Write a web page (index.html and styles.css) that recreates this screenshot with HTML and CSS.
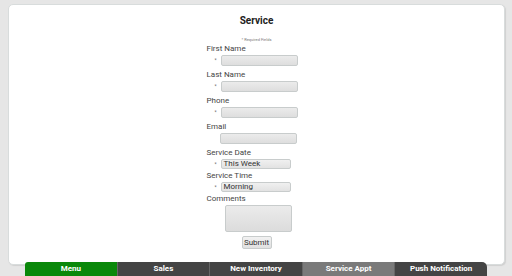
FILE: index.html
```html
<!DOCTYPE html>
<html lang="en">
<head>
    <meta charset="UTF-8">
    <meta name="viewport" content="width=device-width, initial-scale=1.0">
    <title>Service</title>
    <link rel="stylesheet" href="styles.css">
</head>
<body>
    <div class="card">
        <h1>Service</h1>
        <p class="required">* Required Fields</p>

        <form class="service-form" onsubmit="return false">
            <label>First Name</label>
            <div class="field"><span class="star">*</span><input type="text"></div>

            <label>Last Name</label>
            <div class="field"><span class="star">*</span><input type="text"></div>

            <label>Phone</label>
            <div class="field"><span class="star">*</span><input type="text"></div>

            <label>Email</label>
            <div class="field no-star"><input type="text"></div>

            <label>Service Date</label>
            <div class="field pick"><span class="star">*</span><div class="select">This Week</div></div>

            <label>Service Time</label>
            <div class="field pick"><span class="star">*</span><div class="select">Morning</div></div>

            <label>Comments</label>
            <textarea></textarea>

            <button type="submit">Submit</button>
        </form>
    </div>

    <nav class="tabs">
        <a href="#" class="tab menu">Menu</a>
        <a href="#" class="tab">Sales</a>
        <a href="#" class="tab">New Inventory</a>
        <a href="#" class="tab current">Service Appt</a>
        <a href="#" class="tab last">Push Notification</a>
    </nav>
</body>
</html>
```

FILE: styles.css
```css
html, body { margin: 0; padding: 0; }
body { background: #e6e6e6; font-family: Roboto, "Liberation Sans", sans-serif; color: #222; height: 276px; overflow: hidden; }

.card { background: #fff; margin: 4px 7px 0 8px; height: 261px; border: 1px solid #d8dcdc; border-radius: 5px; box-shadow: 1px 1px 1px #d0d0d0; box-sizing: border-box; padding-top: 10px; }
h1 { font-size: 10px; font-weight: bold; text-align: center; margin: 0; line-height: 12px; color: #222; }
.required { font-size: 4px; color: #777; text-align: center; margin: 10px 0 0 0; line-height: 5px; }

.service-form { width: 100px; margin: 2px auto 0 auto; }
label { display: block; font-size: 8px; line-height: 10px; color: #444; }
.field { display: flex; align-items: center; height: 12px; margin: 0 0 4px 8px; }
.field.no-star { margin-left: 13px; }
.star { font-size: 5px; color: #666; width: 6px; }
input { width: 77px; height: 11px; box-sizing: border-box; border: 1px solid #c8cccc; border-radius: 2px; background: linear-gradient(#ebebeb, #dedede); padding: 0; margin: 0; }
.field.pick { margin: 0 0 2px 8px; height: 11px; }
.select { width: 70px; height: 10px; box-sizing: border-box; border: 1px solid #c8cccc; border-radius: 2px; background: linear-gradient(#f0f0f0, #e2e2e2); font-size: 8px; line-height: 8px; padding-left: 2px; color: #333; }

textarea { display: block; width: 67px; height: 27px; box-sizing: border-box; margin: 1px 0 0 18px; border: 1px solid #c8cccc; border-radius: 2px; background: linear-gradient(#ebebeb, #dcdcdc); resize: none; padding: 0; }
button { display: block; margin: 4px 0 0 35px; font-family: Roboto, "Liberation Sans", sans-serif; font-size: 8px; height: 13px; width: 30px; padding: 0; border: 1px solid #c8cccc; border-radius: 2px; background: linear-gradient(#f2f2f2, #e0e0e0); color: #333; }

.tabs { display: flex; margin: -3px 0 0 25px; width: 462px; height: 17px; }
.tab { flex: 1; background: #444; color: #fff; font-weight: bold; font-size: 8px; text-align: center; line-height: 14px; text-decoration: none; border-left: 1px solid #666; }
.tab.menu { background: #0a880a; border-left: none; border-radius: 3px 0 0 0; }
.tab.current { background: #7a7a7a; }
.tab.last { border-radius: 0 5px 0 0; }
```
